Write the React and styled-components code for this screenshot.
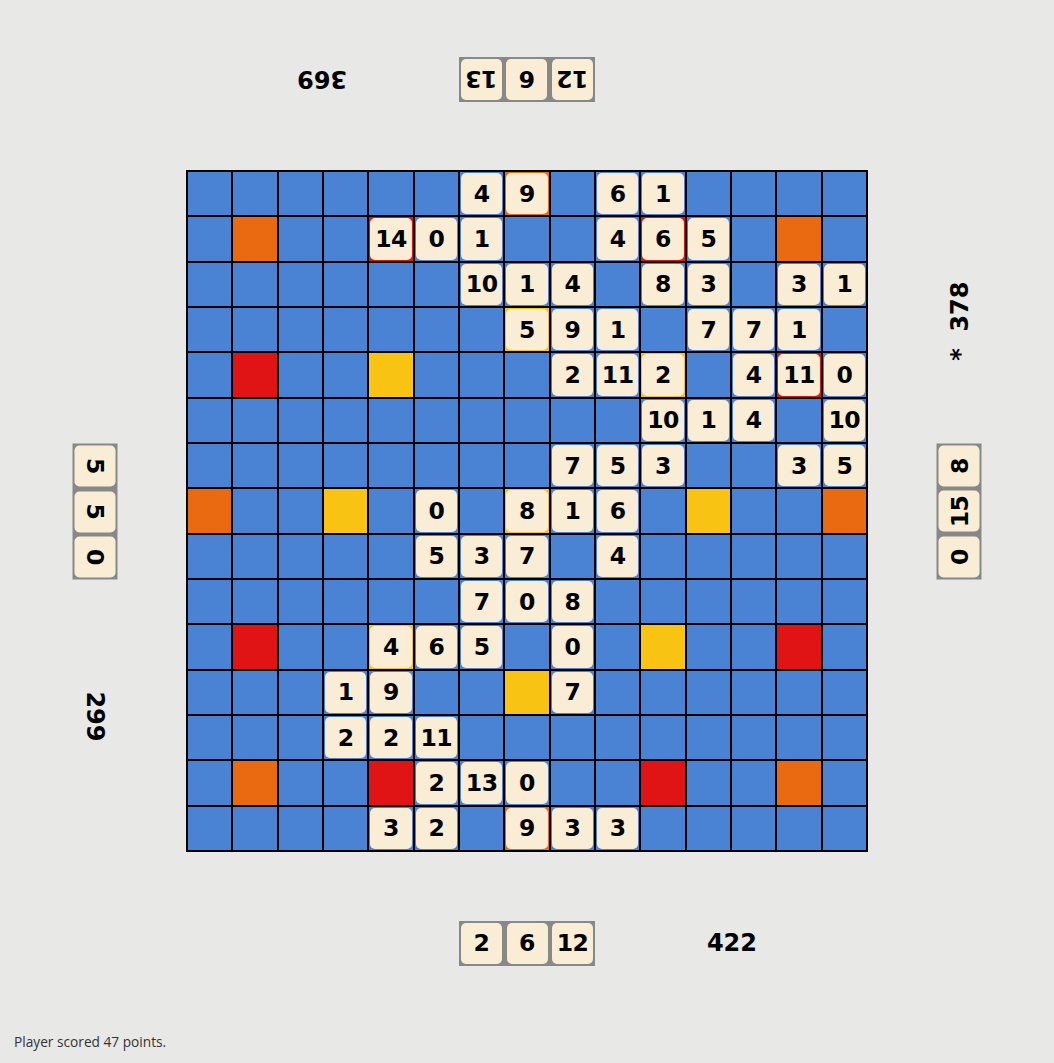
import React from "react";
import styled, { createGlobalStyle } from "styled-components";

const GlobalStyle = createGlobalStyle`
  html, body {
    margin: 0;
    padding: 0;
    background: #e8e8e7;
  }
  body {
    font-family: "DejaVu Sans", sans-serif;
  }
`;

const COLORS = {
  blue: "#4a82d4",
  O: "#ea6a12",
  R: "#e01414",
  Y: "#f9c314",
};

const PREMIUM = {
  O: ["1,1", "1,13", "13,1", "13,13", "7,0", "7,14", "0,7", "14,7"],
  R: ["4,1", "10,1", "4,13", "10,13", "1,4", "1,10", "13,4", "13,10"],
  Y: ["4,4", "4,10", "10,4", "10,10", "7,3", "7,11", "3,7", "11,7", "7,7"],
};

const TILES = {
  0: { 6: 4, 7: 9, 9: 6, 10: 1 },
  1: { 4: 14, 5: 0, 6: 1, 9: 4, 10: 6, 11: 5 },
  2: { 6: 10, 7: 1, 8: 4, 10: 8, 11: 3, 13: 3, 14: 1 },
  3: { 7: 5, 8: 9, 9: 1, 11: 7, 12: 7, 13: 1 },
  4: { 8: 2, 9: 11, 10: 2, 12: 4, 13: 11, 14: 0 },
  5: { 10: 10, 11: 1, 12: 4, 14: 10 },
  6: { 8: 7, 9: 5, 10: 3, 13: 3, 14: 5 },
  7: { 5: 0, 7: 8, 8: 1, 9: 6 },
  8: { 5: 5, 6: 3, 7: 7, 9: 4 },
  9: { 6: 7, 7: 0, 8: 8 },
  10: { 4: 4, 5: 6, 6: 5, 8: 0 },
  11: { 3: 1, 4: 9, 8: 7 },
  12: { 3: 2, 4: 2, 5: 11 },
  13: { 5: 2, 6: 13, 7: 0 },
  14: { 4: 3, 5: 2, 7: 9, 8: 3, 9: 3 },
};

const premiumAt = (r, c) => {
  const key = r + "," + c;
  return Object.keys(PREMIUM).find((k) => PREMIUM[k].includes(key)) || "blue";
};

const PLAYERS = [
  { id: "top", rack: [12, 6, 13], score: "369", turn: 180 },
  { id: "left", rack: [5, 5, 0], score: "299", turn: 90 },
  { id: "right", rack: [0, 15, 8], score: "*  378", turn: -90 },
  { id: "bottom", rack: [2, 6, 12], score: "422", turn: 0 },
];

const Page = styled.div`
  display: flex;
  flex-direction: column;
  min-height: 1063px;
`;

const Table = styled.div`
  display: grid;
  grid-template-columns: 182px 682px 182px;
  grid-template-rows: 170px 682px 170px;
  justify-content: center;
  grid-template-areas:
    ". top ."
    "left board right"
    ". bottom .";
`;

const Seat = styled.div`
  grid-area: ${(p) => p.$area};
  display: flex;
  align-items: center;
  justify-content: center;
  padding: ${(p) =>
    p.$area === "top" ? "0 0 12px" : p.$area === "bottom" ? "12px 0 0" : "0"};
  box-sizing: border-box;
  min-width: 0;
`;

const Panel = styled.div`
  flex-shrink: 0;
  width: 460px;
  display: grid;
  grid-template-columns: 1fr 136px 1fr;
  align-items: center;
  transform: rotate(${(p) => p.$turn}deg);
`;

const Rack = styled.div`
  grid-column: 2;
  display: flex;
  gap: 4.5px;
  padding: 2px;
  background: #888888;
`;

const Tile = styled.div`
  box-sizing: border-box;
  width: ${(p) => (p.$fill ? "100%" : "41px")};
  height: ${(p) => (p.$fill ? "100%" : "41px")};
  display: flex;
  align-items: center;
  justify-content: center;
  background: #f9edd6;
  border-radius: 5px;
  font-family: "DejaVu Sans", sans-serif;
  font-weight: bold;
  font-size: 23.5px;
  color: #000;
  letter-spacing: -0.5px;
`;

const Score = styled.div`
  grid-column: 3;
  text-align: right;
  font-family: "DejaVu Sans", sans-serif;
  font-weight: bold;
  font-size: 24px;
  color: #000;
  white-space: pre;
`;

const Board = styled.div`
  grid-area: board;
  display: grid;
  grid-template-columns: repeat(15, 1fr);
  grid-template-rows: repeat(15, 1fr);
  gap: 2px;
  padding: 2px;
  background: #000;
  box-sizing: border-box;
  width: 682px;
  height: 682px;
`;

const Cell = styled.div`
  background: ${(p) => COLORS[p.$kind]};
  padding: 1px;
  box-sizing: border-box;
  min-width: 0;
  min-height: 0;
`;

const Status = styled.div`
  margin-top: auto;
  padding: 0 0 12px 14px;
  font-family: "Open Sans", sans-serif;
  font-size: 13.7px;
  color: #333;
`;

function PlayerSeat({ player }) {
  return (
    <Seat $area={player.id}>
      <Panel $turn={player.turn}>
        <Rack>
          {player.rack.map((n, i) => (
            <Tile key={i}>{n}</Tile>
          ))}
        </Rack>
        <Score>{player.score}</Score>
      </Panel>
    </Seat>
  );
}

export default function App() {
  const cells = [];
  for (let r = 0; r < 15; r++) {
    for (let c = 0; c < 15; c++) {
      const value = TILES[r][c];
      cells.push(
        <Cell key={r + "-" + c} $kind={premiumAt(r, c)}>
          {value !== undefined && <Tile $fill>{value}</Tile>}
        </Cell>
      );
    }
  }

  return (
    <Page>
      <GlobalStyle />
      <Table>
        {PLAYERS.map((p) => (
          <PlayerSeat key={p.id} player={p} />
        ))}
        <Board>{cells}</Board>
      </Table>
      <Status>Player scored 47 points.</Status>
    </Page>
  );
}
